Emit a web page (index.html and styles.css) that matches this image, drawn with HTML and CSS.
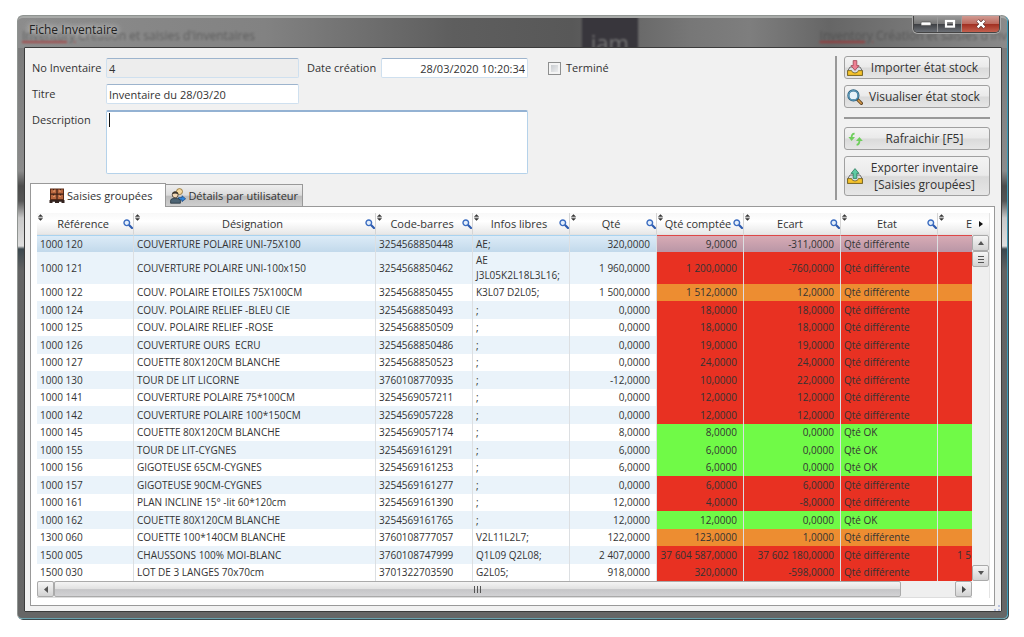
FILE: index.html
```html
<!DOCTYPE html>
<html lang="fr">
<head>
    <meta charset="UTF-8">
    <meta name="viewport" content="width=device-width, initial-scale=1.0">
    <title>Fiche Inventaire</title>
    <link rel="stylesheet" href="styles.css">
</head>
<body>
    <!-- Shared icons -->
    <svg width="0" height="0" class="sprite" aria-hidden="true">
        <symbol id="search" viewBox="0 0 10 10">
            <path d="M5.8 5.8 L9 9" stroke="#2f5cae" stroke-width="2.2" stroke-linecap="round"/>
            <circle cx="3.8" cy="3.8" r="2.8" fill="#e4effb" stroke="#3b6cc0" stroke-width="1.4"/>
        </symbol>
        <symbol id="sort" viewBox="0 0 6 8">
            <path d="M3 0 L6 3 H0 Z M0 5 H6 L3 8 Z" fill="#333"/>
            <path d="M0 3.6 H6" stroke="#777" stroke-width="0.8"/>
        </symbol>
        <symbol id="tray" viewBox="0 0 16 10">
            <path d="M3 1 H13 L15.4 5 V9.4 H0.6 V5 Z" fill="#d9dde2" stroke="#555" stroke-width="0.8"/>
            <path d="M0.6 4.6 H4.6 Q5 7 8 7 Q11 7 11.4 4.6 H15.4 V9.4 H0.6 Z" fill="#f6c32c" stroke="#6b5a1a" stroke-width="0.8"/>
        </symbol>
    </svg>

    <div class="window">
        <header class="titlebar">
            <div class="glass" aria-hidden="true">
                <span class="ghost ghost-left"><u>Inventory</u> Création et saisies d'inventaires</span>
                <span class="ghost-logo">iam</span>
                <span class="ghost ghost-right"><u>Inventory</u> Création et saisies d'inv</span>
            </div>
            <h1>Fiche Inventaire</h1>
            <div class="win-buttons">
                <button type="button" aria-label="Réduire"><svg width="12" height="6" viewBox="0 0 12 6"><rect x="1" y="1" width="10" height="3.4" rx="1" fill="#fff" stroke="#444" stroke-width="0.6"/></svg></button>
                <button type="button" aria-label="Agrandir"><svg width="12" height="10" viewBox="0 0 12 10"><rect x="2" y="2" width="8" height="5.6" fill="none" stroke="#fff" stroke-width="2.2"/></svg></button>
                <button type="button" class="win-close" aria-label="Fermer"><svg width="12" height="10" viewBox="0 0 12 10"><path d="M2.6 1.6 L9.4 8.4 M9.4 1.6 L2.6 8.4" stroke="#4c2522" stroke-width="3.6"/><path d="M2.6 1.6 L9.4 8.4 M9.4 1.6 L2.6 8.4" stroke="#fff" stroke-width="2.4"/></svg></button>
            </div>
        </header>

        <main class="client">
            <div class="top">
                <div class="left">
                    <form class="form">
                        <label for="numero">No Inventaire</label>
                        <input id="numero" type="text" value="4" readonly>
                        <label for="date" class="date-label">Date création</label>
                        <input id="date" type="text" class="date" value="28/03/2020 10:20:34">
                        <div class="done">
                            <input id="termine" type="checkbox">
                            <label for="termine">Terminé</label>
                        </div>
                        <label for="titre" class="first">Titre</label>
                        <input id="titre" type="text" value="Inventaire du 28/03/20">
                        <label for="description" class="first">Description</label>
                        <div class="description">
                            <textarea id="description"></textarea>
                            <span class="caret"></span>
                        </div>
                    </form>

                    <!-- Tabs -->
                    <div class="tabs" role="tablist">
                        <button type="button" role="tab" aria-selected="true" class="tab active">
                            <svg width="16" height="16" viewBox="0 0 16 16">
                                <rect x="1.5" y="1" width="13" height="10.5" fill="#b9673f" stroke="#5b2c18"/>
                                <path d="M8 1 V11.5 M1.5 6.2 H14.5" stroke="#3d2016" stroke-width="1.2"/>
                                <path d="M4 3 H6 M10 3 H12 M4 8.2 H6 M10 8.2 H12" stroke="#f0a878"/>
                                <path d="M4.5 1 V2.2 M11.5 1 V2.2 M4.5 6 V7.4 M11.5 6 V7.4" stroke="#3d2016"/>
                                <path d="M0.5 12 H15.5 V15 H12.5 V13.8 H10 V15 H6 V13.8 H3.5 V15 H0.5 Z" fill="#33231f"/>
                            </svg>
                            Saisies groupées
                        </button>
                        <button type="button" role="tab" aria-selected="false" class="tab">
                            <svg width="16" height="16" viewBox="0 0 16 16">
                                <circle cx="9.5" cy="3.6" r="3" fill="#f4d9a0" stroke="#8b6a2a" stroke-width="0.8"/>
                                <path d="M8.5 9.6 H12 V7.8 L15.6 10.8 L12 13.6 V12 H8.5 Z" fill="#2f86dc" stroke="#1d4f8c" stroke-width="0.8"/>
                                <circle cx="5.2" cy="6.8" r="3" fill="#f3d8b4" stroke="#3c342c" stroke-width="0.8"/>
                                <path d="M2.3 6.2 Q2.4 3.4 5.2 3.5 Q8 3.6 8.1 6.2 Q5 4.6 2.3 6.2 Z" fill="#3c342c"/>
                                <path d="M0.6 15.2 V12.4 Q1 10.6 3 10.6 H7.6 Q9.6 10.6 10.4 12.4 V15.2 Z" fill="#4d6474" stroke="#26343e" stroke-width="0.8"/>
                            </svg>
                            Détails par utilisateur
                        </button>
                    </div>
                </div>

                <!-- Actions -->
                <aside class="actions">
                    <button type="button" class="action">
                        <svg width="16" height="16" viewBox="0 0 16 16">
                            <use href="#tray" x="0" y="6" width="16" height="10"/>
                            <path d="M6.2 0.6 H9.8 V5.6 H12 L8 10.4 L4 5.6 H6.2 Z" fill="#ee7f92" stroke="#9a4353" stroke-width="0.8"/>
                        </svg>
                        <span>Importer état stock</span>
                    </button>
                    <button type="button" class="action">
                        <svg width="16" height="16" viewBox="0 0 16 16">
                            <path d="M10.4 10.4 L14.4 14.4" stroke="#5f4322" stroke-width="3.2" stroke-linecap="round"/>
                            <path d="M11.4 11.4 L14.2 14.2" stroke="#d79a48" stroke-width="1.6" stroke-linecap="round"/>
                            <circle cx="6.4" cy="6.4" r="5" fill="#e8f3fa" stroke="#2f6482" stroke-width="2.2"/>
                            <circle cx="6.4" cy="6.4" r="4.8" fill="none" stroke="#6fb0d2" stroke-width="0.9"/>
                        </svg>
                        <span>Visualiser état stock</span>
                    </button>
                    <hr>
                    <button type="button" class="action">
                        <svg width="16" height="16" viewBox="0 0 16 16">
                            <path d="M7.6 2.6 Q4.4 2.6 4.6 7" fill="none" stroke="#6fce5c" stroke-width="1.8"/>
                            <path d="M1.4 6 H8 L4.6 10 Z" fill="#6fce5c"/>
                            <path d="M9.6 13.8 Q12.8 13.4 12.4 9" fill="none" stroke="#6fce5c" stroke-width="1.8"/>
                            <path d="M9 10 H15.8 L12.4 6 Z" fill="#6fce5c"/>
                        </svg>
                        <span>Rafraichir [F5]</span>
                    </button>
                    <button type="button" class="action tall">
                        <svg width="16" height="16" viewBox="0 0 16 16">
                            <use href="#tray" x="0" y="6" width="16" height="10"/>
                            <path d="M6.2 10.4 H9.8 V5.4 H12 L8 0.6 L4 5.4 H6.2 Z" fill="#5fcba5" stroke="#2c7a5e" stroke-width="0.8"/>
                        </svg>
                        <span>Exporter inventaire<br>[Saisies groupées]</span>
                    </button>
                </aside>
            </div>

            <section class="panel">
                <div class="grid">
                    <table>
                        <colgroup>
                            <col class="c-ref">
                            <col>
                            <col class="c-code">
                            <col class="c-infos">
                            <col class="c-qte">
                            <col class="c-qte">
                            <col class="c-ecart">
                            <col class="c-etat">
                            <col class="c-last">
                        </colgroup>
                        <thead>
                            <tr>
                                <th><div class="head"><svg class="sort"><use href="#sort"/></svg><span>Référence</span><svg class="find"><use href="#search"/></svg></div></th>
                                <th><div class="head"><svg class="sort"><use href="#sort"/></svg><span>Désignation</span><svg class="find"><use href="#search"/></svg></div></th>
                                <th><div class="head"><svg class="sort"><use href="#sort"/></svg><span>Code-barres</span><svg class="find"><use href="#search"/></svg></div></th>
                                <th><div class="head"><svg class="sort"><use href="#sort"/></svg><span>Infos libres</span><svg class="find"><use href="#search"/></svg></div></th>
                                <th><div class="head"><svg class="sort"><use href="#sort"/></svg><span>Qté</span><svg class="find"><use href="#search"/></svg></div></th>
                                <th><div class="head"><svg class="sort"><use href="#sort"/></svg><span>Qté comptée</span><svg class="find"><use href="#search"/></svg></div></th>
                                <th><div class="head"><svg class="sort"><use href="#sort"/></svg><span>Ecart</span><svg class="find"><use href="#search"/></svg></div></th>
                                <th><div class="head"><svg class="sort"><use href="#sort"/></svg><span>Etat</span><svg class="find"><use href="#search"/></svg></div></th>
                                <th><div class="head last"><svg class="sort"><use href="#sort"/></svg><span>E</span></div></th>
                            </tr>
                        </thead>
                        <tbody>
                            <tr class="selected"><td>1000 120</td><td>COUVERTURE POLAIRE UNI-75X100</td><td>3254568850448</td><td>AE;</td><td>320,0000</td><td>9,0000</td><td>-311,0000</td><td>Qté différente</td><td></td></tr>
                            <tr class="red double"><td>1000 121</td><td>COUVERTURE POLAIRE UNI-100x150</td><td>3254568850462</td><td>AE<br>J3L05K2L18L3L16;</td><td>1 960,0000</td><td>1 200,0000</td><td>-760,0000</td><td>Qté différente</td><td></td></tr>
                            <tr class="orange"><td>1000 122</td><td>COUV. POLAIRE ETOILES 75X100CM</td><td>3254568850455</td><td>K3L07 D2L05;</td><td>1 500,0000</td><td>1 512,0000</td><td>12,0000</td><td>Qté différente</td><td></td></tr>
                            <tr class="red"><td>1000 124</td><td>COUV. POLAIRE RELIEF -BLEU CIE</td><td>3254568850493</td><td>;</td><td>0,0000</td><td>18,0000</td><td>18,0000</td><td>Qté différente</td><td></td></tr>
                            <tr class="red"><td>1000 125</td><td>COUV. POLAIRE RELIEF -ROSE</td><td>3254568850509</td><td>;</td><td>0,0000</td><td>18,0000</td><td>18,0000</td><td>Qté différente</td><td></td></tr>
                            <tr class="red"><td>1000 126</td><td>COUVERTURE OURS&nbsp; ECRU</td><td>3254568850486</td><td>;</td><td>0,0000</td><td>19,0000</td><td>19,0000</td><td>Qté différente</td><td></td></tr>
                            <tr class="red"><td>1000 127</td><td>COUETTE 80X120CM BLANCHE</td><td>3254568850523</td><td>;</td><td>0,0000</td><td>24,0000</td><td>24,0000</td><td>Qté différente</td><td></td></tr>
                            <tr class="red"><td>1000 130</td><td>TOUR DE LIT LICORNE</td><td>3760108770935</td><td>;</td><td>-12,0000</td><td>10,0000</td><td>22,0000</td><td>Qté différente</td><td></td></tr>
                            <tr class="red"><td>1000 141</td><td>COUVERTURE POLAIRE 75*100CM</td><td>3254569057211</td><td>;</td><td>0,0000</td><td>12,0000</td><td>12,0000</td><td>Qté différente</td><td></td></tr>
                            <tr class="red"><td>1000 142</td><td>COUVERTURE POLAIRE 100*150CM</td><td>3254569057228</td><td>;</td><td>0,0000</td><td>12,0000</td><td>12,0000</td><td>Qté différente</td><td></td></tr>
                            <tr class="green"><td>1000 145</td><td>COUETTE 80X120CM BLANCHE</td><td>3254569057174</td><td>;</td><td>8,0000</td><td>8,0000</td><td>0,0000</td><td>Qté OK</td><td></td></tr>
                            <tr class="green"><td>1000 155</td><td>TOUR DE LIT-CYGNES</td><td>3254569161291</td><td>;</td><td>6,0000</td><td>6,0000</td><td>0,0000</td><td>Qté OK</td><td></td></tr>
                            <tr class="green"><td>1000 156</td><td>GIGOTEUSE 65CM-CYGNES</td><td>3254569161253</td><td>;</td><td>6,0000</td><td>6,0000</td><td>0,0000</td><td>Qté OK</td><td></td></tr>
                            <tr class="red"><td>1000 157</td><td>GIGOTEUSE 90CM-CYGNES</td><td>3254569161277</td><td>;</td><td>0,0000</td><td>6,0000</td><td>6,0000</td><td>Qté différente</td><td></td></tr>
                            <tr class="red"><td>1000 161</td><td>PLAN INCLINE 15° -lit 60*120cm</td><td>3254569161390</td><td>;</td><td>12,0000</td><td>4,0000</td><td>-8,0000</td><td>Qté différente</td><td></td></tr>
                            <tr class="green"><td>1000 162</td><td>COUETTE 80X120CM BLANCHE</td><td>3254569161765</td><td>;</td><td>12,0000</td><td>12,0000</td><td>0,0000</td><td>Qté OK</td><td></td></tr>
                            <tr class="orange"><td>1300 060</td><td>COUETTE 100*140CM BLANCHE</td><td>3760108777057</td><td>V2L11L2L7;</td><td>122,0000</td><td>123,0000</td><td>1,0000</td><td>Qté différente</td><td></td></tr>
                            <tr class="red"><td>1500 005</td><td>CHAUSSONS 100% MOI-BLANC</td><td>3760108747999</td><td>Q1L09 Q2L08;</td><td>2 407,0000</td><td>37 604 587,0000</td><td>37 602 180,0000</td><td>Qté différente</td><td>1 5</td></tr>
                            <tr class="red"><td>1500 030</td><td>LOT DE 3 LANGES 70x70cm</td><td>3701322703590</td><td>G2L05;</td><td>918,0000</td><td>320,0000</td><td>-598,0000</td><td>Qté différente</td><td></td></tr>
                        </tbody>
                    </table>

                    <div class="side">
                        <button type="button" class="more" aria-label="Colonnes suivantes"><svg width="4" height="6" viewBox="0 0 4 6"><path d="M0 0 L4 3 L0 6 Z" fill="#111"/></svg></button>
                        <div class="vscroll">
                            <button type="button" class="sb" aria-label="Haut"><svg width="6" height="4" viewBox="0 0 6 4"><path d="M3 0 L6 4 H0 Z" fill="#555"/></svg></button>
                            <div class="vthumb"><svg width="8" height="9" viewBox="0 0 8 9"><path d="M1 1.5 H7 M1 4.5 H7 M1 7.5 H7" stroke="#555"/></svg></div>
                            <button type="button" class="sb down" aria-label="Bas"><svg width="6" height="4" viewBox="0 0 6 4"><path d="M0 0 H6 L3 4 Z" fill="#555"/></svg></button>
                        </div>
                    </div>

                    <div class="hscroll">
                        <button type="button" class="sb" aria-label="Gauche"><svg width="4" height="7" viewBox="0 0 4 7"><path d="M4 0 V7 L0 3.5 Z" fill="#555"/></svg></button>
                        <div class="htrack">
                            <div class="hthumb"><svg width="9" height="7" viewBox="0 0 9 7"><path d="M1.5 0 V7 M4.5 0 V7 M7.5 0 V7" stroke="#555"/></svg></div>
                        </div>
                        <button type="button" class="sb" aria-label="Droite"><svg width="4" height="7" viewBox="0 0 4 7"><path d="M0 0 L4 3.5 L0 7 Z" fill="#444"/></svg></button>
                    </div>
                </div>
            </section>
            <svg class="grip" width="8" height="6" viewBox="0 0 8 6" aria-hidden="true"><path d="M5 0 H7 V2 H5 Z M1 4 H3 V6 H1 Z M5 4 H7 V6 H5 Z" fill="#b9c3e0"/></svg>
        </main>
    </div>
</body>
</html>
```
FILE: styles.css
```css
/* General Styling */
* {
    margin: 0;
    padding: 0;
    box-sizing: border-box;
}

body {
    background: #fff;
    padding: 15px 16px 18px 17px;
    font-family: "Trebuchet MS", "Open Sans", sans-serif;
    font-size: 11px;
    line-height: 14px;
    color: #333;
}

button,
input,
textarea {
    font: inherit;
    color: inherit;
}

button svg {
    display: block;
    flex: none;
}

.sprite {
    position: absolute;
}

/* Window frame */
.window {
    position: relative;
    border: 1px solid #8f9491;
    border-right-color: #3a9ab8;
    border-bottom-color: #69a3af;
    border-radius: 6px 6px 5px 5px;
    padding: 0 5px 6px 6px;
    background: linear-gradient(to bottom, #777 0, #8b8b8b 155px, #4c4c4c 170px, #555 185px, #c8c8c8 202px, #dedede 230px, #3c484e 233px, #636363 255px, #666 100%);
    box-shadow: 1px 1px 0 #3c4a4e;
}

/* Title bar */
.titlebar {
    display: flex;
    justify-content: space-between;
    align-items: flex-start;
    height: 31px;
}

.glass {
    position: absolute;
    top: 0;
    left: 0;
    right: 0;
    height: 32px;
    overflow: hidden;
    border-top: 2px solid #a8aaa8;
    border-radius: 5px 5px 0 0;
    background: linear-gradient(to right, #8c8c8c 0, #828282 25%, #5e5e5e 44%, #585858 56%, #777 68%, #7e7e7e 74%, #666 82%, #8a8a8a 100%);
}

.ghost {
    position: absolute;
    top: 11px;
    font-size: 12px;
    color: #444;
    white-space: nowrap;
    filter: blur(1px);
    opacity: 0.6;
}

.ghost u {
    text-decoration-color: #b02020;
    text-decoration-thickness: 2px;
}

.ghost-left {
    left: 4px;
}

.ghost-right {
    right: 0;
}

.ghost-logo {
    position: absolute;
    top: -2px;
    left: 57%;
    width: 56px;
    height: 34px;
    background: #38363c;
    color: #777;
    font-size: 22px;
    line-height: 52px;
    text-align: center;
    filter: blur(1px);
}

.titlebar h1 {
    position: relative;
    padding: 6px 5px 0;
    font-size: 12px;
    font-weight: normal;
    line-height: 16px;
    color: #222;
    text-shadow: 0 0 5px #ddd, 0 0 8px #ccc;
}

.win-buttons {
    position: relative;
    display: flex;
    margin-right: 2px;
    border: 1px solid #444;
    border-top: none;
    border-radius: 0 0 5px 5px;
    box-shadow: 0 0 0 1px #aaa;
    overflow: hidden;
}

.win-buttons button {
    display: flex;
    justify-content: center;
    align-items: center;
    width: 24px;
    height: 16px;
    border: none;
    border-right: 1px solid #999;
    background: linear-gradient(to bottom, #9a9a9a 0, #777 48%, #3f4145 52%, #6c7076 100%);
}

.win-buttons .win-close {
    width: 37px;
    border-right: none;
    background: linear-gradient(to bottom, #d09a92 0, #be6a5e 48%, #a13022 52%, #c4604e 100%);
}

/* Client area */
.client {
    position: relative;
    border: 1px solid #3c3c3c;
    border-radius: 1px;
    padding: 8px 6px 5px 5px;
    background: #f1f1f1;
}

.top {
    display: flex;
    justify-content: space-between;
}

.left {
    display: flex;
    flex-direction: column;
    justify-content: space-between;
}

/* Form */
.form {
    display: grid;
    grid-template-columns: 66px 193px 66px 147px auto;
    column-gap: 8px;
    row-gap: 6px;
    align-items: center;
    padding: 2px 0 0 2px;
}

.form .first {
    grid-column: 1;
    align-self: start;
    line-height: 20px;
}

.form label {
    white-space: nowrap;
}

.form input[type="text"],
.form textarea {
    width: 100%;
    height: 20px;
    border: 1px solid #cfe0ef;
    border-top-color: #9db4cd;
    border-radius: 2px;
    padding: 0 2px;
    background: #fff;
    outline: none;
}

.form input[readonly] {
    background: #ededed;
}

.form input.date {
    text-align: right;
}

.date-label {
    text-align: right;
}

.done {
    display: flex;
    align-items: center;
    gap: 5px;
    padding-left: 12px;
}

.done input {
    appearance: none;
    width: 13px;
    height: 13px;
    border: 1px solid #8e8f8f;
    background: linear-gradient(135deg, #bfc3c8, #f6f6f6);
    box-shadow: inset 0 0 0 2px #f4f4f4;
}

.description {
    position: relative;
    grid-column: 2 / 5;
    height: 64px;
}

.form .description textarea {
    display: block;
    height: 64px;
    border-color: #b5d2ea;
    border-top: 2px solid #94b2d3;
    resize: none;
}

.caret {
    position: absolute;
    top: 3px;
    left: 3px;
    width: 1px;
    height: 14px;
    background: #111;
}

/* Tabs */
.tabs {
    display: flex;
    align-items: flex-end;
}

.tab {
    display: flex;
    align-items: center;
    gap: 2px;
    height: 22px;
    padding: 0 4px;
    border: 1px solid #999;
    border-left: none;
    border-bottom: none;
    background: linear-gradient(to bottom, #eee 0, #dcdcdc 48%, #bdbdbd 54%, #cfcfcf 100%);
    white-space: nowrap;
}

.tab.active {
    position: relative;
    height: 24px;
    margin-bottom: -1px;
    padding: 0 13px 0 18px;
    border-left: 1px solid #999;
    background: #fff;
}

/* Action buttons */
.actions {
    display: flex;
    flex-direction: column;
    gap: 6px;
    width: 155px;
    margin-right: 5px;
    margin-bottom: 6px;
    padding: 0 0 4px 7px;
    border-left: 2px solid #999;
}

.action {
    display: flex;
    align-items: center;
    height: 23px;
    padding: 0 3px 0 2px;
    border: 1px solid #a0a0a0;
    border-radius: 3px;
    background: linear-gradient(to bottom, #f3f3f3 0, #eaeaea 48%, #dadada 52%, #e6e6e6 100%);
    font-size: 12px;
}

.action span {
    flex: 1;
    text-align: center;
    line-height: 17px;
    white-space: nowrap;
}

.action.tall {
    height: 40px;
}

.actions hr {
    height: 2px;
    margin: 3px 0 2px;
    border: none;
    background: #999;
}

/* Panel with the data grid */
.panel {
    border: 1px solid #999;
    padding: 6px 4px 7px 6px;
    background: #fff;
}

.grid {
    display: grid;
    grid-template-columns: 1fr 17px;
    border-right: 1px solid #e4e4e4;
}

table {
    width: 100%;
    table-layout: fixed;
    border-collapse: separate;
    border-spacing: 0;
    font-size: 10px;
}

.c-ref,
.c-code,
.c-infos,
.c-ecart,
.c-etat {
    width: 97px;
}

.c-qte {
    width: 87px;
}

.c-last {
    width: 34px;
}

th {
    height: 22px;
    border-right: 1px solid #d5d5d5;
    border-bottom: 1px solid #e2e2e2;
    background: linear-gradient(to bottom, #f8f8f8, #fff 40%, #e8e8e8);
    font-size: 11px;
    font-weight: normal;
}

th:last-child {
    border-right: none;
}

.head {
    display: flex;
    align-items: center;
    height: 20px;
}

.head span {
    flex: 1;
    text-align: center;
    white-space: nowrap;
}

.head.last span {
    text-align: right;
}

.sort {
    align-self: flex-start;
    flex: none;
    width: 5px;
    height: 7px;
    margin-left: 1px;
}

.find {
    flex: none;
    width: 10px;
    height: 10px;
}

td {
    height: 17px;
    padding: 0 3px;
    border-right: 1px solid #dcdfe2;
    overflow: hidden;
    line-height: 15px;
    white-space: nowrap;
}

/* rows alternate 17 and 18 pixels */
tbody tr:nth-child(even) td {
    height: 18px;
    background: #eaf3fa;
}

tbody tr.selected td {
    height: 17px;
    border-top: 1px solid #a9d3f0;
    background: linear-gradient(to bottom, #dcebf7, #c2d9eb);
}

tbody tr.double td {
    height: 32px;
}

td:nth-child(n+5):nth-child(-n+7),
td:last-child {
    padding: 0 6px 0 0;
    text-align: right;
}

td:last-child {
    border-right: none;
    padding-right: 1px;
}

tbody tr.red td:nth-child(n+6) {
    background: #e83122;
}

tbody tr.orange td:nth-child(n+6) {
    background: #ed8d31;
}

tbody tr.green td:nth-child(n+6) {
    background: #70fa47;
}

tbody tr.selected td:nth-child(n+6) {
    border-top-color: #dd4848;
    background: linear-gradient(to bottom, #d8abb5, #b996a6);
}

/* Scrollbars */
.side {
    display: flex;
    flex-direction: column;
}

.more {
    display: flex;
    justify-content: center;
    align-items: center;
    height: 22px;
    border: none;
    border-bottom: 1px solid #e2e2e2;
    background: linear-gradient(to bottom, #f8f8f8, #fff 40%, #e8e8e8);
}

.vscroll {
    display: flex;
    flex: 1;
    flex-direction: column;
    background: #efefef;
}

.sb,
.vthumb {
    display: flex;
    flex: none;
    justify-content: center;
    align-items: center;
    width: 17px;
    height: 16px;
    border: 1px solid #aaa;
    border-radius: 2px;
    background: linear-gradient(to bottom, #f6f6f6, #d3d3d3);
}

.down {
    margin-top: auto;
}

.hscroll {
    display: flex;
    height: 17px;
    border-bottom: 1px solid #ddd;
    background: #efefef;
}

.htrack {
    flex: 1;
}

.hthumb {
    display: flex;
    justify-content: center;
    align-items: center;
    width: 94%;
    height: 16px;
    border: 1px solid #aaa;
    border-radius: 2px;
    background: linear-gradient(to bottom, #f4f4f4 0, #e2e2e2 48%, #c6c6c8 54%, #d2d2d4 100%);
}

.grip {
    position: absolute;
    right: 0;
    bottom: 0;
}
```
